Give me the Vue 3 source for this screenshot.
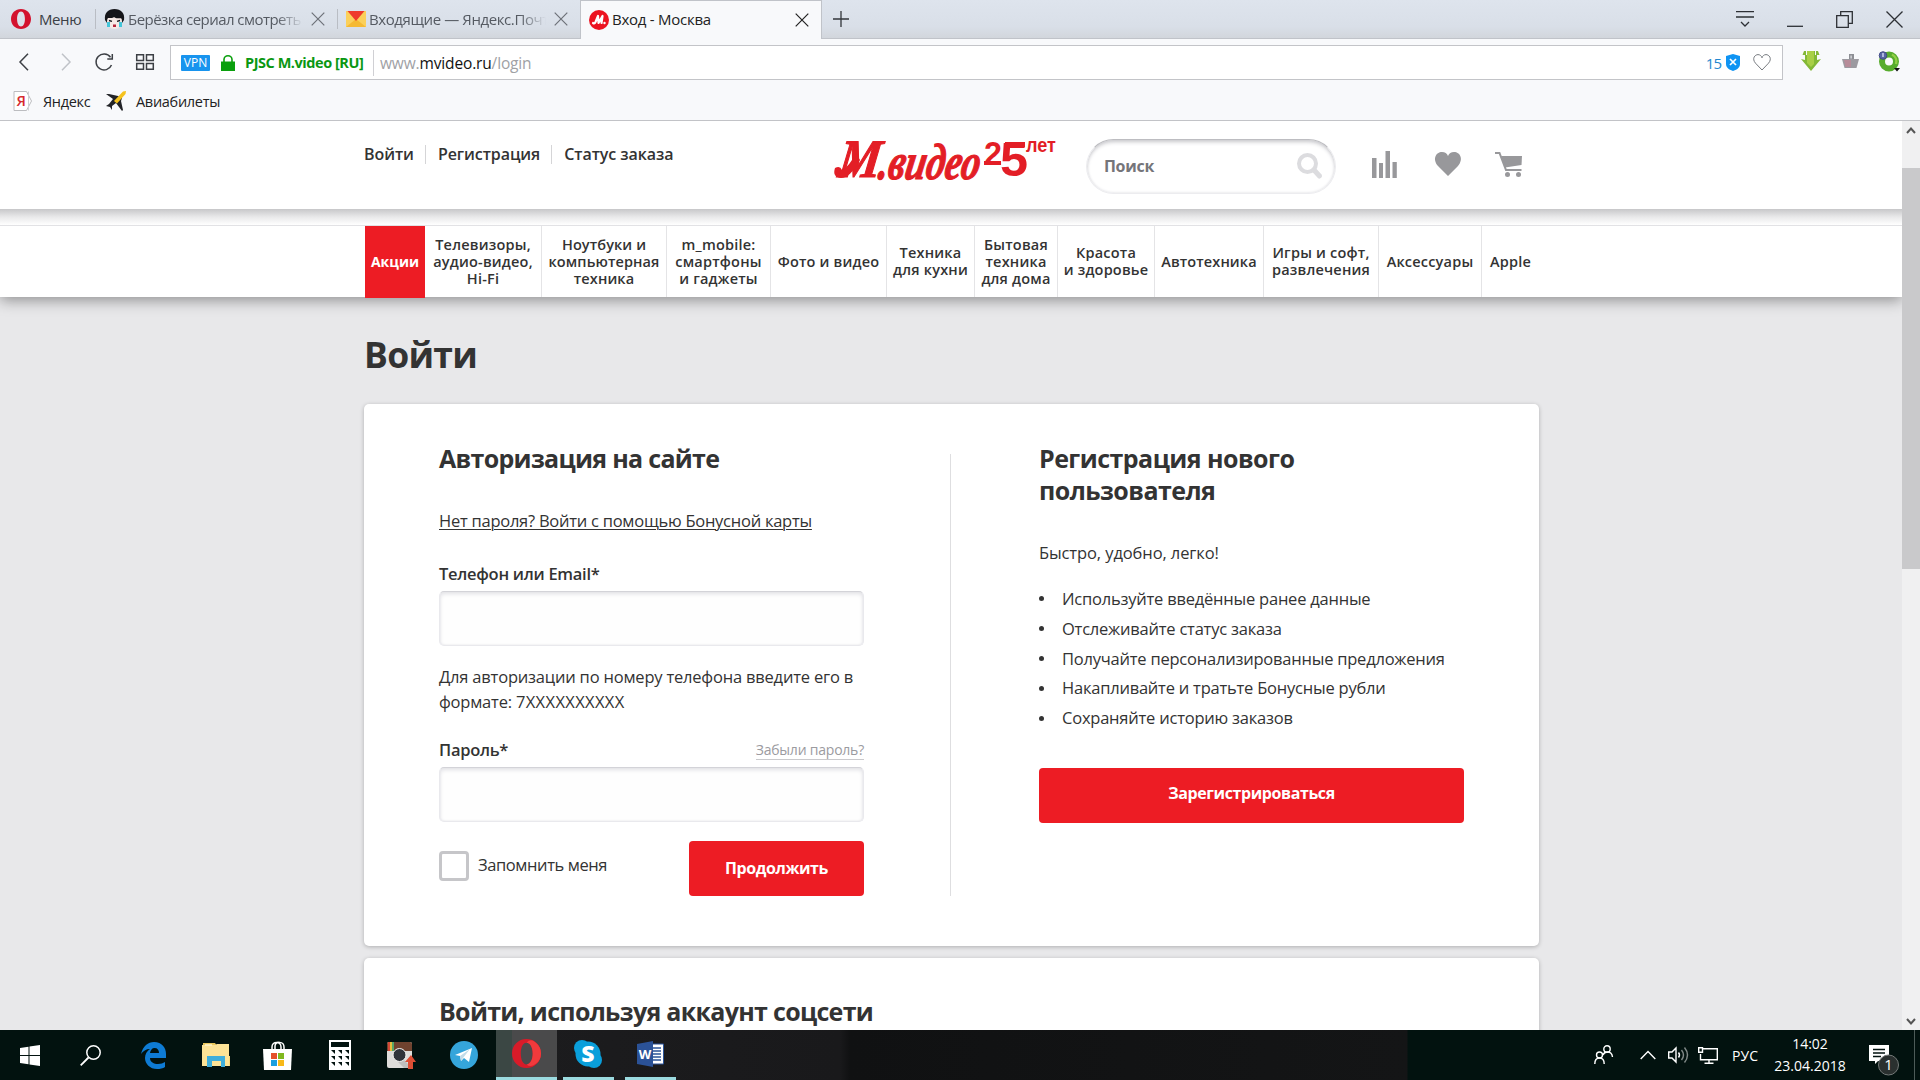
<template>
  <div class="screen">
    <header class="tabs">
      <div class="menu">
        <svg class="opera" width="20" height="20" viewBox="0 0 28 28">
          <path fill="#d3122e" fill-rule="evenodd" d="M14 0C6 0 0 6 0 14s6 14 14 14 14-6 14-14S22 0 14 0zm0 3.500c3.500 0 5.500 4.500 5.500 10.500s-2 10.500-5.500 10.500S8.500 20 8.500 14 10.500 3.500 14 3.500z" />
        </svg>
        <span>Меню</span>
      </div>
      <div class="tab tab-first">
        <svg width="21" height="21" viewBox="0 0 21 21">
          <path fill="#15161a" d="M1 11C0 4 4 0 10.500 0S21 4 20 11l-2 3H3z" />
          <ellipse cx="10.500" cy="12.500" rx="7.500" ry="7.500" fill="#f6e9e6" />
          <path fill="#15161a" d="M2.500 9.500C5 8 8 10 10 8c2 2 6 1 8.500 1.500L17 3 10 1 4 3z" />
          <path stroke="#15161a" stroke-width="1.300" d="M5 11.500l3 .8M16 11.500l-3 .8" />
          <path fill="#43c5d9" d="M3 13h3v5H3zM15 13h3v5h-3z" />
          <path fill="#b5253a" d="M9 15.500h3v2.500H9z" />
        </svg>
        <span class="tab-title t1">Берёзка сериал смотреть</span>
        <svg class="x" width="14" height="14" viewBox="0 0 14 14"><path d="M.7.7l12.600 12.600M13.300.7L.7 13.300" /></svg>
      </div>
      <div class="tab tab-second">
        <svg width="20" height="16" viewBox="0 0 20 16">
          <path fill="#fbd05a" d="M0 0h20v16H0z" />
          <path fill="#f5b932" d="M0 16L10 8l10 8z" />
          <path fill="#ee3a2c" d="M1.500 0h17L10 10z" />
        </svg>
        <span class="tab-title t2">Входящие — Яндекс.Почт</span>
        <svg class="x" width="14" height="14" viewBox="0 0 14 14"><path d="M.7.7l12.600 12.600M13.300.7L.7 13.300" /></svg>
      </div>
      <div class="tab tab-active">
        <svg width="20" height="20" viewBox="0 0 20 20">
          <circle cx="10" cy="10" r="10" fill="#ec1320" />
          <path fill="none" stroke="#fff" stroke-width="2.200" stroke-linecap="round" stroke-linejoin="round" d="M4 13q1.500 1 2.500-1L9 6l.5 7L13.500 6l-1 7" />
          <circle cx="15.500" cy="13" r="1.200" fill="#fff" />
        </svg>
        <span class="tab-title t3">Вход - Москва</span>
        <svg class="x" width="14" height="14" viewBox="0 0 14 14"><path d="M.7.7l12.600 12.600M13.300.7L.7 13.300" /></svg>
      </div>
      <svg class="plus" width="16" height="16" viewBox="0 0 16 16"><path d="M8 0v16M0 8h16" /></svg>
      <div class="window-buttons">
        <svg width="18" height="16" viewBox="0 0 18 16"><path d="M0 .7h18M0 6h18M5 11l4 4 4-4" /></svg>
        <svg width="16" height="16" viewBox="0 0 16 16"><path d="M0 15.300h16" /></svg>
        <svg width="17" height="17" viewBox="0 0 17 17"><path d="M.7 4.700h11.600v11.600H.7zM4.700 4.700V.7h11.600v11.600h-4" /></svg>
        <svg width="17" height="17" viewBox="0 0 17 17"><path d="M.5.5l16 16M16.500.5l-16 16" /></svg>
      </div>
    </header>

    <div class="toolbar">
      <div class="nav-buttons">
        <svg width="10" height="18" viewBox="0 0 10 18"><path d="M9 .7L1 9l8 8.300" /></svg>
        <svg class="disabled" width="10" height="18" viewBox="0 0 10 18"><path d="M1 .7L9 9l-8 8.300" /></svg>
        <svg width="19" height="18" viewBox="0 0 19 18"><path d="M15.500 4.200A8 8 0 1 0 16.500 12M17.300 1v5h-5" /></svg>
        <svg width="18" height="16" viewBox="0 0 18 16"><path d="M.7.7h6.800v5.800H.7zM10.500.7h6.800v5.800h-6.800zM.7 9.500h6.800v5.800H.7zM10.500 9.500h6.800v5.800h-6.800z" /></svg>
      </div>
      <div class="address">
        <span class="vpn">VPN</span>
        <svg class="lock" width="14" height="16" viewBox="0 0 14 16">
          <path fill="#0a9f0d" d="M0 6.500h14V16H0z" />
          <path fill="none" stroke="#0a9f0d" stroke-width="1.600" d="M3 7V4.500a4 3.700 0 0 1 8 0V7" />
        </svg>
        <span class="cert">PJSC M.video [RU]</span>
        <span class="url">www.<b>mvideo.ru</b>/login</span>
        <span class="blocked">15</span>
        <svg width="14" height="17" viewBox="0 0 14 17">
          <path fill="#0f94f3" d="M7 0l7 2v8c0 4-4 6-7 7-3-1-7-3-7-7V2z" />
          <path stroke="#fff" stroke-width="1.700" d="M4 5l6 6M10 5l-6 6" />
        </svg>
        <svg class="like" width="18" height="17" viewBox="0 0 18 17"><path fill="none" stroke="#777b80" d="M9 16L2.500 9.200C-1.500 4.500 2 .6 5 .6c2 0 3.500 1.400 4 3.200C9.500 2 11 .6 13 .6c3 0 6.500 3.900 2.500 8.600z" /></svg>
      </div>
      <div class="extensions">
        <svg width="20" height="20" viewBox="0 0 20 20">
          <path fill="#83b836" d="M0 8l4 1V4H1.500L3 0h14l1.500 4H16v5l4-1-10 12z" />
          <path fill="#a8cf46" d="M6 0h7v13l-3 3-4-4z" />
          <path stroke="#f8f9fb" d="M5.500 0v4M14.500 0v4" />
        </svg>
        <svg width="17" height="14" viewBox="0 0 17 14">
          <path fill="#9c9aa0" d="M0 5h17l-2.500 9h-12z" />
          <path fill="#b78c99" d="M2 6h7v7H3.500z" />
          <path fill="#8d8f94" d="M7 0h5v5H7z" /><path fill="#e6e6ea" d="M8.500 1.500h1.200v3H8.500z" />
        </svg>
        <svg width="21" height="21" viewBox="0 0 21 21">
          <circle cx="10" cy="10.500" r="7" fill="none" stroke="#57ac2d" stroke-width="6" />
          <path fill="none" stroke="#91cf46" stroke-width="2.500" d="M13 3.500A8 8 0 0 1 17 13" />
          <circle cx="4" cy="4.500" r="3.800" fill="#5865a4" stroke="#424c87" />
          <path stroke="#dfe4ff" stroke-width="1.300" d="M4 2v4" />
          <path fill="#111" d="M15 17h6l-3 3.500z" />
        </svg>
      </div>
    </div>

    <div class="bookmarks">
      <svg width="20" height="20" viewBox="0 0 20 20">
        <path fill="#fff" stroke="#bcbdc0" d="M1 .5h12.500l5 9.500-5 9.500H1z" />
        <path stroke="#d0d0d3" d="M15.500.5v19" />
        <text x="3.500" y="15" font-size="14.500" fill="#d62a2e" font-weight="600">Я</text>
      </svg>
      <span class="bm1">Яндекс</span>
      <svg class="plane" width="21" height="20" viewBox="0 0 21 20">
        <path fill="#222327" d="M0 3h3l9 2 4 2-1 3 2 9-1 1-6-8-4 3v4l-2-3-4-1 3-2 4-5z" />
        <path fill="#f5c21d" d="M8 10L17 0.500 20 0l-.5 3L11 12.500z" />
      </svg>
      <span class="bm2">Авиабилеты</span>
    </div>

    <div class="viewport">
      <main class="page">
        <div class="site-header">
          <nav class="user-links">
            <a class="u1">Войти</a>
            <a class="u2">Регистрация</a>
            <a class="u3">Статус заказа</a>
          </nav>
          <svg class="logo" width="238" height="72" viewBox="0 0 238 72">
            <g class="script" fill="#e31e26" stroke="#e31e26">
              <text transform="translate(11 42) skewX(-8)" font-size="54" textLength="42" lengthAdjust="spacingAndGlyphs">М</text>
              <text transform="translate(51 44) skewX(-10)" font-size="51" textLength="101" lengthAdjust="spacingAndGlyphs">.видео</text>
            </g>
            <path fill="#e31e26" d="M9 33q5-3 7 2 7-3 14-17l4 7Q24 43 15 43q-9-1-6-10z" />
            <g class="years" fill="#e31e26">
              <text x="158" y="30" font-size="33" textLength="18" lengthAdjust="spacingAndGlyphs">2</text>
              <text x="174" y="41" font-size="49" textLength="28" lengthAdjust="spacingAndGlyphs">5</text>
              <text x="200" y="17" font-size="20" textLength="30" lengthAdjust="spacingAndGlyphs">лет</text>
            </g>
            <path fill="#e31e26" d="M158 26h17v4h-17zM179 7h20v5h-20z" />
          </svg>
          <div class="search">
            <span>Поиск</span>
            <svg width="26" height="26" viewBox="0 0 26 26">
              <circle cx="10.500" cy="10.500" r="8.500" fill="none" stroke="#dcdcdf" stroke-width="4" />
              <path stroke="#dcdcdf" stroke-width="5" stroke-linecap="round" d="M17.500 17.500l5 5.500" />
            </svg>
          </div>
          <svg class="compare" width="25" height="27" viewBox="0 0 25 27"><path fill="#98989b" d="M0 7h4.500v20H0zM7 12h4v15H7zM13.500 0H18v27h-4.500zM20.500 11h4.300v16h-4.300z" /></svg>
          <svg class="fav" width="26" height="24" viewBox="0 0 26 24"><path fill="#98989b" d="M13 24L3 14C-3 7 1 0 7 0c3 0 5 1.500 6 4 1-2.500 3-4 6-4 6 0 10 7 4 14z" /></svg>
          <svg class="cart" width="27" height="25" viewBox="0 0 27 25">
            <path fill="#98989b" d="M6 4h21l-.5 9L10 15.500z" />
            <path fill="none" stroke="#98989b" stroke-width="2" d="M0 1h4.500L11 18h15.500" />
            <circle cx="12.500" cy="22.500" r="2.500" fill="#98989b" /><circle cx="23.500" cy="22.500" r="2.500" fill="#98989b" />
          </svg>
        </div>
        <div class="header-shadow"></div>

        <nav class="catalog">
          <a v-for="item in catalog" :key="item.id" :class="['cat', item.id]">
            <span v-for="line in item.lines" :key="line">{{ line }}</span>
          </a>
        </nav>

        <section class="content">
          <h1>Войти</h1>
          <div class="card login-card">
            <form class="column" @submit.prevent>
              <h2 class="h-auth">Авторизация на сайте</h2>
              <a class="bonus"><span>Нет пароля? Войти с помощью Бонусной карты</span></a>
              <label class="l-phone">Телефон или Email*</label>
              <input v-model="login" type="text" />
              <p class="help"><span>Для авторизации по номеру телефона введите его в</span><br /><span>формате: <span class="mask">7XXXXXXXXXX</span></span></p>
              <div class="password-row">
                <label>Пароль*</label>
                <a class="forgot">Забыли пароль?</a>
              </div>
              <input v-model="password" type="password" />
              <div class="actions">
                <span class="checkbox" :class="{ checked: remember }" @click="remember = !remember"></span>
                <span class="remember">Запомнить меня</span>
                <button class="btn submit">Продолжить</button>
              </div>
            </form>
            <div class="divider"></div>
            <div class="column">
              <h2 class="h-reg">Регистрация нового<br />пользователя</h2>
              <p class="lead">Быстро, удобно, легко!</p>
              <ul>
                <li v-for="b in benefits" :key="b">{{ b }}</li>
              </ul>
              <button class="btn register">Зарегистрироваться</button>
            </div>
          </div>
          <div class="card social-card">
            <h2>Войти, используя аккаунт соцсети</h2>
          </div>
        </section>
      </main>
      <div class="scrollbar">
        <svg width="10" height="7" viewBox="0 0 10 7"><path d="M1 6l4-4.500L9 6" /></svg>
        <div class="thumb"></div>
        <svg class="down" width="10" height="7" viewBox="0 0 10 7"><path d="M1 1l4 4.500L9 1" /></svg>
      </div>
    </div>

    <footer class="taskbar">
      <div class="task start">
        <svg width="20" height="21" viewBox="0 0 20 21"><path fill="#fff" d="M0 3l8.500-1.200V10H0zM9.500 1.600L20 0v10H9.500zM0 11h8.500v8.200L0 18zM9.500 11H20v10L9.500 19.400z" /></svg>
      </div>
      <div class="task find">
        <svg width="21" height="21" viewBox="0 0 21 21"><circle cx="13.500" cy="7.500" r="6.700" fill="none" stroke="#fff" stroke-width="1.500" /><path stroke="#fff" stroke-width="1.800" d="M8.500 12.500L.7 20.300" /></svg>
      </div>
      <div class="task">
        <svg width="25" height="27" viewBox="0 0 25 27"><path fill="#0e7bd4" d="M0 12C2 4 7 0 13 0c8 0 12 6 12 12v4H9c0 4 4 6 8 6 3 0 5-1 7-2v5c-2 1.500-5 2-8 2C9 27 4 22 4 16c0-4 2-7 5-9-4 0-7 2-9 5zm9-1h9c0-3-1.500-5-4.500-5C11 6 9.500 8 9 11z" /></svg>
      </div>
      <div class="task">
        <svg class="nudge" width="28" height="24" viewBox="0 0 28 24">
          <path fill="#e9c75b" d="M1 0h12l2 3H1z" /><path fill="#fde396" d="M0 2h13l2-1h12v22H0z" />
          <path fill="#f6d77c" d="M27 13h1v10h-1z" /><path fill="#3faedb" d="M5 13h18v11h-4v-6h-9v6H5z" />
          <path stroke="#fff4cd" stroke-width="1.500" d="M3 2h7" />
        </svg>
      </div>
      <div class="task">
        <svg width="29" height="29" viewBox="0 0 29 29">
          <path fill="none" stroke="#fff" stroke-width="1.500" d="M9 9V6c0-6 9-6 9 0v3M12 9V5c0-5 9-5 9 1v3" />
          <path fill="#fff" d="M0 8h29l-1 21H1z" />
          <path fill="#e4502a" d="M8 12h6v6H8z" /><path fill="#80b81e" d="M15 12h6v6h-6z" /><path fill="#1a9fdf" d="M8 19h6v6H8z" /><path fill="#f8b918" d="M15 19h6v6h-6z" />
        </svg>
      </div>
      <div class="task">
        <svg class="nudge" width="22" height="30" viewBox="0 0 22 30">
          <path fill="#fff" fill-rule="evenodd" d="M0 0h22v30H0zM2 2v5h18V2z" />
          <path v-for="n in 9" :key="n" fill="#02120f" d="M0 0h4v4z" :transform="`translate(${2 + ((n - 1) % 3) * 7} ${10 + Math.floor((n - 1) / 3) * 6})`" />
        </svg>
      </div>
      <div class="task">
        <svg width="29" height="27" viewBox="0 0 29 27">
          <rect width="25" height="26" rx="2" fill="#deddda" />
          <path fill="#70432f" d="M2 0h21q2 0 2 2v7H0V2q0-2 2-2z" />
          <path fill="#d44a37" d="M1 0h2v9H1z" /><path fill="#e8bd3c" d="M3 0h2v9H3z" /><path fill="#57a768" d="M5 0h2v9H5z" />
          <path fill="#c0bfbd" d="M16 17l9 9h-8l-8-8z" />
          <circle cx="12.500" cy="13" r="6.500" fill="#30343a" stroke="#f4f4f2" />
          <path fill="#dd4e34" d="M24 13l5 7h-3v7h-5v-7h-3z" />
        </svg>
      </div>
      <div class="task">
        <svg class="nudge" width="28" height="28" viewBox="0 0 28 28">
          <circle cx="14" cy="14" r="14" fill="#35a5db" />
          <path fill="#fff" d="M5 14l17-7-3 14-5-4-3 3-1-5z" /><path fill="#c2dce9" d="M10 15l10-7-7 9-2 3z" />
        </svg>
      </div>
      <div class="task current">
        <svg width="29" height="29" viewBox="0 0 28 28">
          <path fill="#d81b29" fill-rule="evenodd" d="M14 0C6 0 0 6 0 14s6 14 14 14 14-6 14-14S22 0 14 0zm0 3.500c3.500 0 6 4.500 6 10.500s-2.500 10.500-6 10.500S8.500 20 8.500 14 10.500 3.500 14 3.500z" />
          <path fill="#f03a3c" d="M14 3.500Q18-1 23 3.500q5 4 5 10.500T23 24q-5 4-9 .5c3.500 0 6-4.500 6-10.500S17.500 3.500 14 3.500z" />
        </svg>
      </div>
      <div class="task open">
        <svg width="28" height="28" viewBox="0 0 28 28">
          <circle cx="8" cy="8" r="8" fill="#0a9fdb" /><circle cx="20" cy="20" r="8" fill="#0a9fdb" /><circle cx="14" cy="14" r="12.500" fill="#0a9fdb" />
          <text x="14" y="22" font-size="23" font-weight="800" fill="#fff" text-anchor="middle">S</text>
        </svg>
      </div>
      <div class="task open">
        <svg width="27" height="26" viewBox="0 0 27 26">
          <path fill="#fff" stroke="#2a5398" d="M12 3h14.500v20H12z" />
          <path stroke="#2a5398" stroke-width="1.300" d="M16 7h8M16 10h8M16 13h8M16 16h8M16 19h8" />
          <path fill="#2b5297" d="M0 3l16-3v26L0 23z" />
          <text x="8" y="18" font-size="13" font-weight="700" fill="#fff" text-anchor="middle">W</text>
        </svg>
      </div>
      <div class="tray">
        <svg class="people" width="19" height="20" viewBox="0 0 19 20"><path d="M.8 19q0-6 4.700-6t4.700 6M9 10q1-3 4.500-3 4.500 0 5 5" /><circle cx="5.500" cy="10" r="3" /><circle cx="13" cy="4" r="3.200" /></svg>
        <svg class="chevron" width="16" height="10" viewBox="0 0 16 10"><path d="M.7 9L8 1.500 15.300 9" /></svg>
        <svg class="speaker" width="21" height="18" viewBox="0 0 21 18"><path d="M.7 6H4l4-4v14l-4-4H.7zM10.500 6.500q2 2.500 0 5" /><path opacity=".5" d="M13.500 4q4 5 0 10M16.500 1.500q6 7.500 0 15" /></svg>
        <svg class="network" width="20" height="17" viewBox="0 0 20 17"><path d="M5 1.700h14.300v11H2.500V7M11 13v3M6.500 16.300h9M.7.700h3.800v4.500H.7z" /></svg>
        <span class="lang">РУС</span>
        <div class="clock"><span class="time">14:02</span><span class="date">23.04.2018</span></div>
        <svg class="note" width="32" height="31" viewBox="0 0 32 31">
          <path fill="#fff" d="M0 0h20v16H9l-3 3v-3H0z" /><path stroke="#02120f" stroke-width="1.500" d="M4 4.500h12M4 8h12M4 11.500h8" />
          <circle cx="19.500" cy="20" r="10" fill="#2a302f" stroke="#747978" />
          <text x="19.500" y="25" font-size="15" fill="#fff" text-anchor="middle">1</text>
        </svg>
      </div>
    </footer>
  </div>
</template>

<script setup>
import { ref } from 'vue'

const login = ref('')
const password = ref('')
const remember = ref(false)

const catalog = [
  { id: 'sale', lines: ['Акции'] },
  { id: 'tv', lines: ['Телевизоры,', 'аудио-видео,', 'Hi-Fi'] },
  { id: 'laptops', lines: ['Ноутбуки и', 'компьютерная', 'техника'] },
  { id: 'mobile', lines: ['m_mobile:', 'смартфоны', 'и гаджеты'] },
  { id: 'photo', lines: ['Фото и видео'] },
  { id: 'kitchen', lines: ['Техника', 'для кухни'] },
  { id: 'home', lines: ['Бытовая', 'техника', 'для дома'] },
  { id: 'beauty', lines: ['Красота', 'и здоровье'] },
  { id: 'auto', lines: ['Автотехника'] },
  { id: 'games', lines: ['Игры и софт,', 'развлечения'] },
  { id: 'accessories', lines: ['Аксессуары'] },
  { id: 'apple', lines: ['Apple'] }
]

const benefits = [
  'Используйте введённые ранее данные',
  'Отслеживайте статус заказа',
  'Получайте персонализированные предложения',
  'Накапливайте и тратьте Бонусные рубли',
  'Сохраняйте историю заказов'
]
</script>

<style>
body {
  margin: 0;
  overflow: hidden;
}
</style>

<style scoped>
* {
  box-sizing: border-box;
}
svg {
  display: block;
  flex: none;
  overflow: visible;
}
h1, h2, p, ul {
  margin: 0;
  padding: 0;
}
.screen {
  display: flex;
  flex-direction: column;
  width: 1920px;
  height: 1080px;
  overflow: hidden;
  font-family: "Open Sans", "Noto Sans", sans-serif;
  font-size: 15px;
  color: #333;
  white-space: nowrap;
}

/* browser chrome */
.tabs {
  display: flex;
  align-items: center;
  height: 39px;
  background: linear-gradient(#dee4ed, #d9dfe8 70%, #d2d6dc);
  border-bottom: 1px solid #c0c3c9;
}
.menu {
  display: flex;
  align-items: center;
  width: 95px;
  padding-left: 11px;
  gap: 8px;
  color: #3c4046;
  letter-spacing: -.4px;
}
.tab {
  display: flex;
  align-items: center;
  color: #555a62;
}
.tab-first, .tab-second {
  border-left: 1px solid #b9bdc4;
  height: 20px;
}
.tab-first {
  width: 242px;
  padding-left: 8px;
}
.tab-second {
  width: 243px;
  padding-left: 8px;
}
.tab-active {
  width: 242px;
  height: 39px;
  padding-left: 8px;
  background: #f8f9fb;
  border: 1px solid #c0c3c9;
  border-bottom: 0;
  color: #222;
}
.tab-title {
  margin-left: 3px;
  margin-top: -1px;
  line-height: 22px;
}
.t1 {
  width: 175px;
  letter-spacing: -.55px;
}
.t2 {
  width: 177px;
  letter-spacing: -.4px;
}
.t1, .t2 {
  -webkit-mask-image: linear-gradient(90deg, #000 85%, transparent);
}
.t3 {
  width: 175px;
  letter-spacing: -.25px;
}
.x {
  margin-left: 8px;
  fill: none;
  stroke: #6d7178;
  stroke-width: 1.2;
}
.tab-active .x {
  stroke: #222;
}
.plus {
  margin-left: 11px;
  stroke: #33363b;
  stroke-width: 1.3;
}
.window-buttons {
  display: flex;
  align-items: center;
  gap: 33px;
  margin-left: auto;
  margin-right: 17px;
  fill: none;
  stroke: #2d3035;
  stroke-width: 1.3;
}
.toolbar {
  display: flex;
  height: 44px;
  padding-top: 6px;
  background: #f8f9fb;
}
.nav-buttons {
  display: flex;
  align-items: center;
  width: 170px;
  height: 33px;
  padding-left: 19px;
  fill: none;
  stroke: #3d4045;
  stroke-width: 1.5;
}
.nav-buttons svg:nth-child(2) {
  margin-left: 32px;
  margin-right: 24px;
}
.nav-buttons svg:nth-child(4) {
  margin-left: 22px;
}
.nav-buttons .disabled {
  stroke: #c0c3c8;
}
.address {
  display: flex;
  align-items: center;
  width: 1613px;
  height: 35px;
  padding-left: 10px;
  background: #fff;
  border: 1px solid #c3c4c8;
}
.vpn {
  width: 29px;
  height: 16px;
  margin-top: 1px;
  border-radius: 1px;
  background: #1894ee;
  color: #fff;
  font-size: 12px;
  line-height: 16px;
  text-align: center;
}
.lock {
  margin-left: 11px;
}
.cert {
  width: 129px;
  margin-left: 10px;
  border-right: 1px solid #d0d0d4;
  color: #0a9712;
  font-size: 14.5px;
  font-weight: 700;
  line-height: 26px;
  letter-spacing: -.45px;
}
.url {
  margin-left: 6px;
  color: #a0a1a5;
  font-size: 15.5px;
  letter-spacing: -.15px;
}
.url b {
  color: #111;
  font-weight: 400;
}
.blocked {
  margin-left: auto;
  margin-right: 5px;
  color: #2488d0;
  letter-spacing: -1px;
}
.like {
  margin-left: 13px;
  margin-right: 11px;
}
.extensions {
  display: flex;
  align-items: center;
  gap: 20.5px;
  height: 32px;
  padding-left: 18px;
}
.bookmarks {
  display: flex;
  align-items: center;
  height: 38px;
  padding-left: 13px;
  padding-bottom: 1px;
  background: #f8f9fb;
  border-bottom: 1px solid #c2c3c7;
  color: #222;
}
.bm1 {
  width: 73px;
  padding-left: 10px;
}
.bm2 {
  margin-left: 9px;
}
.bm1, .bm2 {
  font-size: 14.5px;
  letter-spacing: -.3px;
}

/* page */
.viewport {
  display: flex;
  height: 909px;
  overflow: hidden;
}
.page {
  width: 1902px;
  background: #e8e8ea;
}
.site-header {
  display: flex;
  align-items: flex-start;
  height: 88px;
  padding-left: 364px;
  background: #fff;
}
.user-links {
  display: flex;
  width: 462px;
  margin-top: 24px;
  font-size: 16px;
  font-weight: 600;
  line-height: 19px;
  letter-spacing: -.07px;
}
.user-links a + a {
  margin-left: 11px;
  padding-left: 12px;
  border-left: 1px solid #d5d5d7;
}
.logo {
  margin-top: 14px;
}
.script {
  font-family: "Liberation Serif", serif;
  font-weight: 700;
  font-style: italic;
  stroke-width: 1.2px;
}
.years {
  font-family: "Liberation Sans", sans-serif;
  font-weight: 700;
}
.search {
  display: flex;
  align-items: center;
  justify-content: space-between;
  width: 250px;
  height: 55px;
  margin-top: 18px;
  margin-left: 22px;
  padding: 0 12px 1px 17px;
  border: 1px solid #ececef;
  border-top-color: #bdbdc1;
  border-radius: 28px;
  box-shadow: inset 0 3px 4px -1px #c9c9cd, inset 0 0 3px #dadade;
  color: #75757a;
  font-size: 16px;
  font-weight: 700;
  letter-spacing: -.3px;
}
.compare {
  margin: 30px 0 0 36px;
}
.fav {
  margin: 31px 0 0 38px;
}
.cart {
  margin: 31px 0 0 34px;
}
.header-shadow {
  height: 16px;
  background: linear-gradient(#c7c7c9, #e9e9ea 50%, #fff);
}
.catalog {
  display: flex;
  height: 72px;
  padding-left: 365px;
  border-top: 1px solid #e2e2e5;
  background: #fff;
  box-shadow: 0 3px 14px rgba(0, 0, 0, .4);
  clip-path: inset(0 0 -30px 0);
}
.cat {
  display: flex;
  flex-direction: column;
  align-items: center;
  justify-content: center;
  padding-bottom: 1px;
  border-right: 1px solid #e4e4e6;
  font-size: 14.5px;
  font-weight: 600;
  line-height: 17px;
  letter-spacing: .2px;
}
.sale {
  width: 60px;
  height: 72px;
  border: 0;
  background: #ed1c24;
  color: #fff;
  font-size: 14px;
  font-weight: 700;
  letter-spacing: 0;
}
.tv { width: 117px; }
.laptops { width: 125px; }
.mobile { width: 104px; }
.photo { width: 116px; }
.kitchen { width: 88px; }
.home { width: 83px; }
.beauty { width: 97px; }
.auto { width: 109px; }
.games { width: 115px; }
.accessories { width: 103px; }
.apple {
  width: 57px;
  border: 0;
}
.auto, .laptops {
  letter-spacing: .1px;
}
.content {
  width: 1175px;
  margin-left: 364px;
}
h1 {
  padding-top: 35px;
  margin-bottom: 28px;
  font-size: 35.5px;
  font-weight: 700;
  line-height: 44px;
  letter-spacing: -.7px;
}
h2 {
  font-size: 25px;
  font-weight: 700;
  line-height: 32px;
  letter-spacing: -.7px;
}
.h-reg {
  letter-spacing: -.55px;
}
.card {
  background: #fff;
  border-radius: 5px;
  box-shadow: 0 1px 4px rgba(0, 0, 0, .25);
}
.login-card {
  display: flex;
  height: 542px;
  padding: 38px 75px 50px;
}
.column {
  display: flex;
  flex-direction: column;
  width: 425px;
  font-size: 16.5px;
  letter-spacing: -.22px;
}
.divider {
  width: 1px;
  height: 442px;
  margin: 12px 88px 0 86px;
  background: #dedee0;
}
.bonus {
  margin-top: 35px;
  line-height: 24px;
  letter-spacing: -.25px;
  text-decoration: underline;
  text-decoration-thickness: 1px;
  text-underline-offset: 2px;
}
label {
  margin-top: 29px;
  font-weight: 600;
  line-height: 24px;
  letter-spacing: -.28px;
}
input {
  width: 425px;
  height: 55px;
  margin-top: 5px;
  padding: 0 14px;
  border: 1px solid #e9e9ed;
  border-top-color: #d3d3d8;
  border-radius: 5px;
  outline: 0;
  background: #fefefe;
  box-shadow: inset 0 2px 4px #e2e2e6, inset 0 0 2px #e2e2e6;
}
.help {
  margin-top: 18px;
  line-height: 25px;
  letter-spacing: -.2px;
}
.mask {
  letter-spacing: .35px;
}
.password-row {
  display: flex;
  justify-content: space-between;
  align-items: flex-start;
  margin-top: 24px;
}
.password-row label {
  margin: 0;
}
.forgot {
  margin-top: 2px;
  border-bottom: 1px solid #c9c9cc;
  color: #9b9b9f;
  font-size: 14px;
  line-height: 19px;
}
.actions {
  display: flex;
  align-items: center;
  height: 55px;
  margin-top: 19px;
}
.checkbox {
  width: 30px;
  height: 30px;
  margin-top: -5px;
  border: 3px solid #c6c6c9;
  border-radius: 4px;
}
.checked {
  background: #ed1c24;
}
.remember {
  margin-left: 9px;
  margin-top: -8px;
  letter-spacing: -.4px;
}
.btn {
  height: 55px;
  padding: 0;
  border: 0;
  border-radius: 4px;
  background: #ed1c24;
  color: #fff;
  font-family: inherit;
  font-size: 16px;
  font-weight: 700;
  letter-spacing: -.4px;
}
.submit {
  width: 175px;
  margin-left: auto;
  padding-bottom: 1px;
}
.register {
  width: 425px;
  margin-top: 35px;
  padding-bottom: 4px;
}
.lead {
  margin-top: 35px;
  line-height: 24px;
  letter-spacing: -.1px;
}
ul {
  margin-top: 19px;
  list-style: none;
}
li {
  display: flex;
  align-items: center;
  line-height: 29.8px;
}
li::before {
  content: "";
  width: 5px;
  height: 5px;
  margin-right: 18px;
  border-radius: 50%;
  background: #333;
}
.social-card {
  height: 200px;
  margin-top: 12px;
  padding: 37px 75px;
}
.scrollbar {
  display: flex;
  flex-direction: column;
  align-items: center;
  width: 18px;
  padding: 6px 0 5px;
  background: #f0f0f1;
  fill: none;
  stroke: #555;
  stroke-width: 2;
}
.thumb {
  width: 18px;
  height: 401px;
  margin-top: 34px;
  background: #c9c9cb;
}
.down {
  margin-top: auto;
}

/* taskbar */
.taskbar {
  display: flex;
  height: 50px;
  background: linear-gradient(90deg, #02120f 496px, #1c1c1e 496px, #19191b 840px, #101112 850px, #141516 1407px, #02120f 1408px);
}
.task {
  display: flex;
  align-items: center;
  justify-content: center;
  width: 62px;
  height: 50px;
}
.nudge {
  margin-left: 2px;
}
.start {
  width: 60px;
}
.find {
  width: 62px;
  padding-right: 2px;
}
.current {
  width: 61px;
  margin-left: 2px;
  background: linear-gradient(90deg, #3b4744 16px, #4a4a4b 16px);
  border-bottom: 3px solid #9bdadf;
}
.open {
  width: 51px;
  margin-left: 6px;
  border-bottom: 3px solid #9bdadf;
}
.current svg, .open svg {
  margin-right: 1px;
}
.open + .open {
  margin-left: 11px;
}
.tray {
  display: flex;
  align-items: center;
  margin-left: auto;
  color: #fff;
  font-size: 14px;
}
.people, .chevron, .speaker, .network {
  fill: none;
  stroke: #fff;
  stroke-width: 1.4;
}
.chevron { margin-left: 27px; }
.speaker { margin-left: 12px; }
.network { margin-left: 9px; }
.lang { margin-left: 14px; }
.clock {
  display: flex;
  flex-direction: column;
  align-items: center;
  width: 76px;
  margin-left: 14px;
  line-height: 22px;
}
.note {
  margin-left: 21px;
  margin-right: 13px;
  margin-top: 10px;
}
.tray::after {
  content: "";
  width: 1px;
  height: 50px;
  margin-right: 5px;
  background: #4d5b58;
}
</style>
